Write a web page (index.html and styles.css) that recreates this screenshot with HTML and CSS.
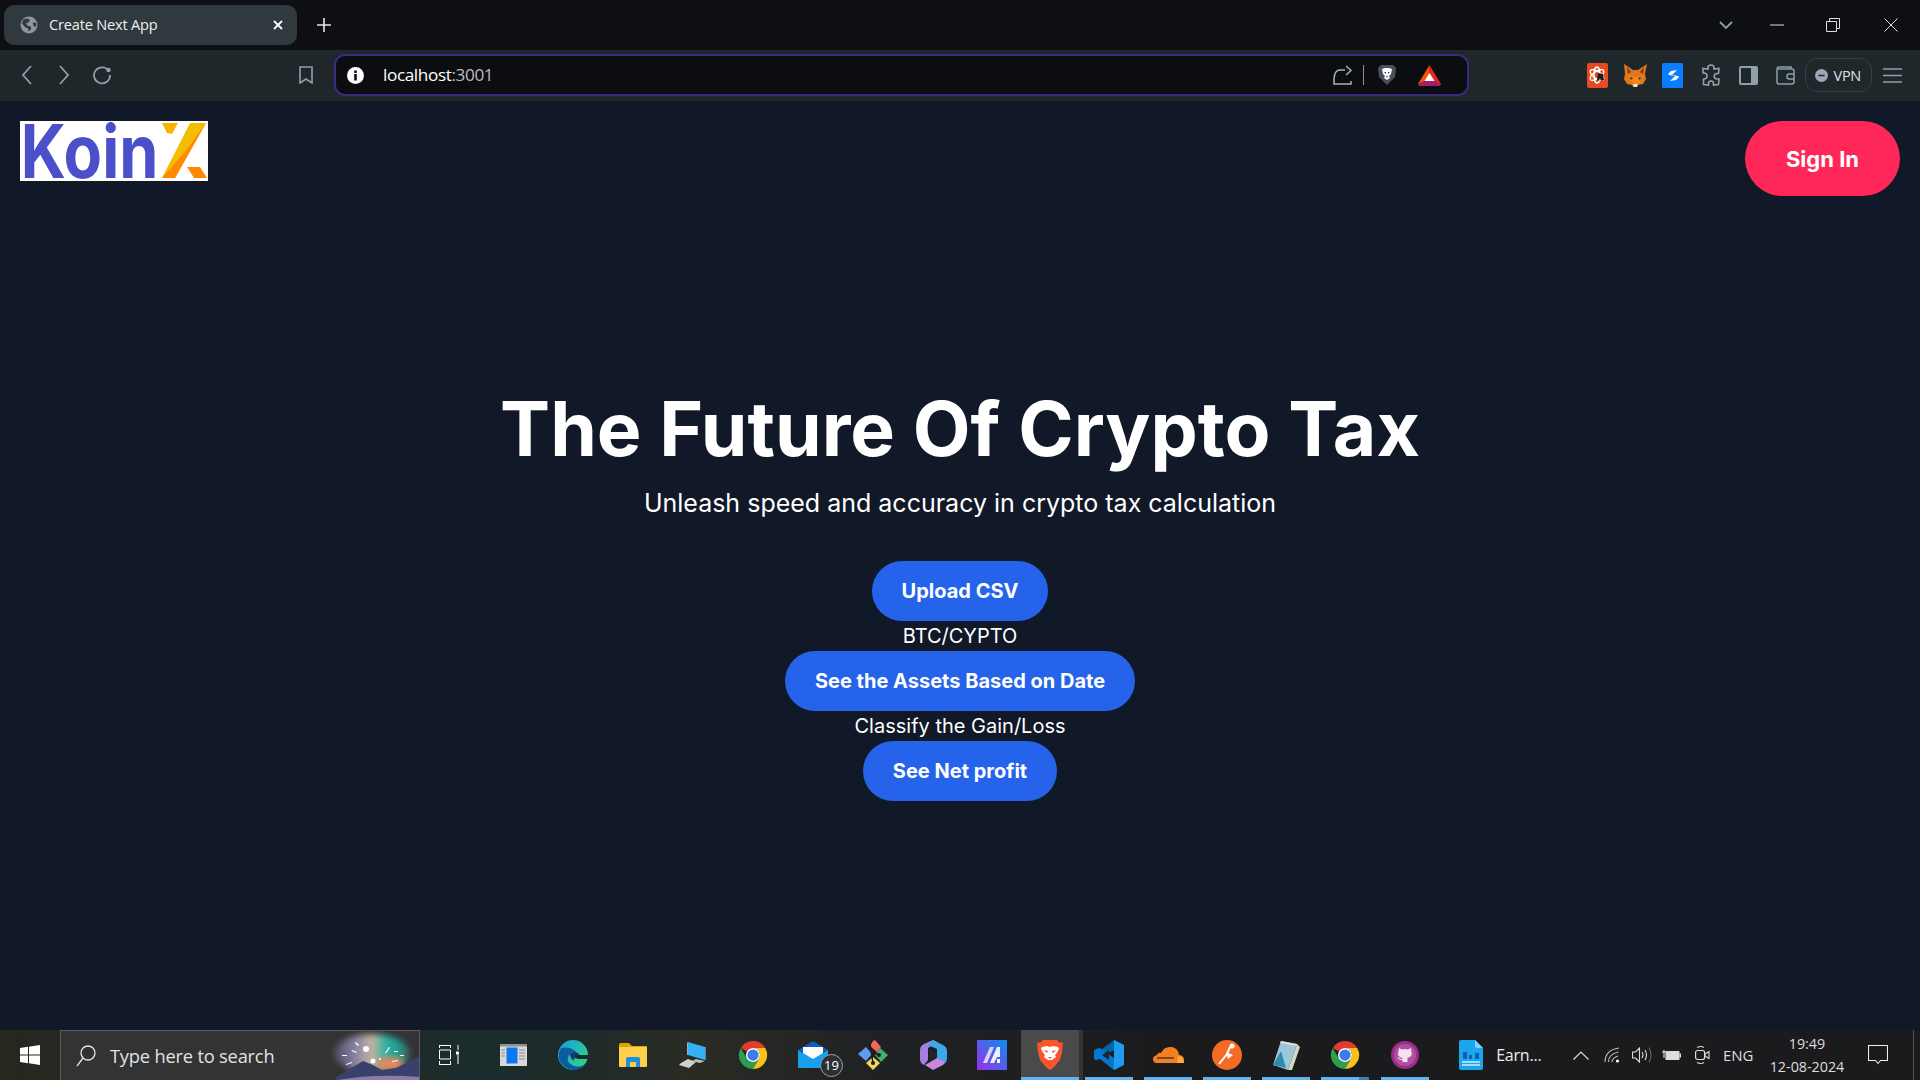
FILE: index.html
```html
<!DOCTYPE html>
<html lang="en">

<head>
    <meta charset="UTF-8">
    <meta name="viewport" content="width=device-width, initial-scale=1.0">
    <title>Create Next App</title>
    <link rel="stylesheet" href="styles.css">
</head>

<body>
    <svg class="defs" width="0" height="0">
        <symbol id="chrome" viewBox="0 0 32 32">
            <path fill="#e33b2e" d="M3 8.5A15 15 0 0 1 29 8.5H16A7.5 7.5 0 0 0 9.5 12.25Z" />
            <path fill="#2f9e4f" d="M3 8.5L9.5 19.75A7.5 7.5 0 0 0 22.5 19.75L16 31A15 15 0 0 1 3 8.5Z" />
            <path fill="#fbc116" d="M29 8.5H16A7.5 7.5 0 0 1 22.5 19.75L16 31A15 15 0 0 0 29 8.5Z" />
            <circle cx="16" cy="16" r="7.5" fill="#fff" />
            <circle cx="16" cy="16" r="6" fill="#3b7de8" />
        </symbol>
    </svg>

    <!-- browser tabs -->
    <div class="tabstrip">
        <div class="tab">
            <svg class="tab-globe" width="18" height="18" viewBox="0 0 18 18">
                <circle cx="9" cy="9" r="8.5" fill="#8d979c" />
                <path fill="#30393e" d="M6 2.5l4 1-1 2.5-3 1.5 2 2.5 3 .5v2.5l-2 2.5-1-3-3-1.5-3-3.5 1-3.5zM12.5 7l3.5-.5.5 3-2 1.5z" />
            </svg>
            <span class="tab-title">Create Next App</span>
            <svg width="12" height="12" viewBox="0 0 12 12">
                <path d="M2 2l8 8M10 2l-8 8" stroke="#fff" stroke-width="1.8" />
            </svg>
        </div>
        <svg class="newtab" width="16" height="16" viewBox="0 0 16 16">
            <path d="M8 1v14M1 8h14" stroke="#e8e8e8" stroke-width="1.6" />
        </svg>
        <div class="winbtns">
            <svg width="14" height="10" viewBox="0 0 14 10">
                <path d="M1 2l6 6 6-6" fill="none" stroke="#8fa0a8" stroke-width="1.8" />
            </svg>
            <svg class="win-min" width="14" height="2" viewBox="0 0 14 2">
                <path d="M0 1h14" stroke="#ddd" stroke-width="1" />
            </svg>
            <svg class="win-restore" width="14" height="14" viewBox="0 0 14 14">
                <path d="M.5 3.5h10v10H.5zM3.5 3.5V.5h10v10h-3" fill="none" stroke="#ddd" />
            </svg>
            <svg class="win-close" width="14" height="14" viewBox="0 0 14 14">
                <path d="M.5.5l13 13M13.5.5l-13 13" stroke="#ddd" />
            </svg>
        </div>
    </div>

    <!-- address bar and extensions -->
    <div class="toolbar">
        <div class="navbtns">
            <svg width="12" height="20" viewBox="0 0 12 20">
                <path d="M10 1L2 10l8 9" fill="none" stroke="#8fa0a8" stroke-width="1.8" />
            </svg>
            <svg width="12" height="20" viewBox="0 0 12 20">
                <path d="M2 1l8 9-8 9" fill="none" stroke="#8fa0a8" stroke-width="1.8" />
            </svg>
            <svg class="reload" width="20" height="20" viewBox="0 0 20 20">
                <path d="M17 6.5A8 8 0 1 0 18 10" fill="none" stroke="#8fa0a8" stroke-width="1.8" />
                <circle cx="16.5" cy="5" r="2.2" fill="#8fa0a8" />
            </svg>
        </div>
        <svg class="bookmark" width="14" height="18" viewBox="0 0 14 18">
            <path d="M1 1h12v16l-6-4-6 4z" fill="none" stroke="#8fa0a8" stroke-width="1.6" />
        </svg>
        <div class="addressbar">
            <svg width="17" height="17" viewBox="0 0 17 17">
                <circle cx="8.5" cy="8.5" r="8.5" fill="#fff" />
                <path d="M7.2 3.5h2.6v2.4H7.2zM7.2 7h2.6v6.5H7.2z" fill="#0c0d11" />
            </svg>
            <span class="url">localhost<span class="url-port">:3001</span></span>
            <svg class="share" width="20" height="20" viewBox="0 0 20 20">
                <path d="M12 5H7Q1.5 5 1 14M13 1l5 4.5-5 4.5M1 14v5h17v-3" fill="none" stroke="#a9b1b5" stroke-width="1.5" />
            </svg>
            <span class="addr-sep"></span>
            <svg class="lion" width="20" height="22" viewBox="0 0 20 22">
                <path fill="#4b4f5c" d="M4 1h12l3 3-1 9-8 8-8-8-1-9z" />
                <path fill="#fff" d="M5 5l3-1h4l3 1-1 5-2 2 1 2-3 2-3-2 1-2-2-2z" />
                <path fill="#4b4f5c" d="M7 8h2v2zM13 8h-2v2zM9 12h2l-1 2z" />
            </svg>
            <svg class="bat" width="23" height="21" viewBox="0 0 23 21">
                <path fill="#ff5000" d="M11.5 0L0 19h6l5.5-9z" />
                <path fill="#e8261c" d="M11.5 0L23 19h-6l-5.5-9z" />
                <path fill="#9e1f63" d="M0 19l6-3h11l6 3-1 2H1z" />
                <path fill="#fff" d="M11.5 8l5 8h-10z" />
            </svg>
        </div>
        <div class="extensions">
            <div class="ext">
                <svg width="21" height="25" viewBox="0 0 21 25">
                    <rect width="21" height="25" rx="2" fill="#e84a1f" />
                    <g fill="none" stroke="#fff" stroke-width="1.4">
                        <ellipse cx="10" cy="12" rx="8" ry="3.5" transform="rotate(35 10 12)" />
                        <ellipse cx="10" cy="12" rx="8" ry="3.5" transform="rotate(-35 10 12)" />
                        <ellipse cx="10" cy="12" rx="3" ry="8" />
                    </g>
                    <path d="M11 10l5 1 1 6-3 1-1-3-1 3-2-1z" fill="#1b1b1b" />
                </svg>
            </div>
            <div class="ext">
                <svg width="23" height="23" viewBox="0 0 23 23">
                    <path fill="#e2761b" d="M0 0l9 6h5l9-6-2 10 1 5-3 5-5 1-1 2H9l-1-2-5-1-3-5 1-5z" />
                    <path fill="#f6851b" d="M4 11l7 2 1 0 7-2-3 8-4 1-4-1z" />
                    <path fill="#763d16" d="M3 3l4 5-3 2zM20 3l-4 5 3 2z" />
                    <path fill="#e4ebf0" d="M9 20h5l-1 3h-3z" />
                    <path fill="#233447" d="M6 13l3 1-2 2zM17 13l-3 1 2 2z" />
                </svg>
            </div>
            <div class="ext">
                <svg width="21" height="25" viewBox="0 0 21 25">
                    <rect width="21" height="25" rx="1.5" fill="#0a7cff" />
                    <path d="M15 7l-6 1-3 3 1 1 6 1-5 5 6-1 3-3-1-1-6-1z" fill="#fff" />
                </svg>
            </div>
            <div class="ext">
                <svg width="20" height="22" viewBox="0 0 20 22">
                    <path d="M7 3.5a3 2.5 0 0 1 6 0V5l5-.5-.5 5H16a2.5 2.5 0 0 0 0 5.5h2l-.5 5.5-5 .5v-1.500a2.5 2.5 0 0 0-5 0V21l-5-.5V15H3a3 3 0 0 0 0-6H2V4.5L7 5z" fill="none" stroke="#8fa0a8" stroke-width="1.6" />
                </svg>
            </div>
            <div class="ext">
                <svg width="19" height="19" viewBox="0 0 19 19">
                    <rect x="1" y="1" width="17" height="17" rx="1" fill="none" stroke="#8fa0a8" stroke-width="2" />
                    <rect x="12" y="1" width="6" height="17" fill="#8fa0a8" />
                </svg>
            </div>
            <div class="ext">
                <svg width="19" height="19" viewBox="0 0 19 19">
                    <path d="M15 3V1H3Q1 1 1 3v13q0 2 2 2h13q2 0 2-2V5q0-2-2-2H2M18 8h-5q-2 0-2 2.5t2 2.5h5" fill="none" stroke="#8fa0a8" stroke-width="1.5" />
                </svg>
            </div>
            <div class="vpn">
                <svg width="13" height="13" viewBox="0 0 13 13">
                    <circle cx="6.5" cy="6.5" r="6.5" fill="#9ea3b8" />
                    <path d="M3.5 6.5h6" stroke="#1f272a" stroke-width="1.5" />
                </svg>
                <span>VPN</span>
            </div>
            <svg class="burger" width="19" height="15" viewBox="0 0 19 15">
                <path d="M0 1h19M0 7.5h19M0 14h19" stroke="#8fa0a8" stroke-width="1.5" />
            </svg>
        </div>
    </div>

    <!-- the app itself -->
    <div class="page">
        <header class="top">
            <div class="logo">
                <span class="logo-text">Koin</span>
                <svg class="logo-x" width="48" height="60" viewBox="0 0 48 60">
                    <path fill="#f4b400" d="M2 2h16l-6 11-5-1z" />
                    <path fill="#f5bd00" d="M30 2h16L15 57H2z" />
                    <path fill="#ff8a00" d="M46 2L15 57H2l26-30z" />
                    <path fill="#ff8a00" d="M27 46h13l7 11H34z" />
                </svg>
            </div>
            <button class="signin">Sign In</button>
        </header>
        <main class="hero">
            <h1>The Future Of Crypto Tax</h1>
            <p class="sub">Unleash speed and accuracy in crypto tax calculation</p>
            <button class="action">Upload CSV</button>
            <div class="step">BTC/CYPTO</div>
            <button class="action">See the Assets Based on Date</button>
            <div class="step">Classify the Gain/Loss</div>
            <button class="action">See Net profit</button>
        </main>
    </div>

    <!-- windows taskbar -->
    <div class="taskbar">
        <div class="start">
            <svg width="20" height="20" viewBox="0 0 20 20">
                <path fill="#fff" d="M0 3l8-1.2v7.7H0zM9 1.7L20 0v9.5H9zM0 10.5h8v7.7L0 17zM9 10.5h11V20L9 18.3z" />
            </svg>
        </div>
        <div class="search">
            <svg width="20" height="24" viewBox="0 0 20 24">
                <circle cx="12" cy="9" r="7" fill="none" stroke="#e6e6e6" stroke-width="1.3" />
                <path d="M7 14l-6 8" stroke="#e6e6e6" stroke-width="1.3" />
            </svg>
            <span class="search-text">Type here to search</span>
            <svg class="search-art" width="92" height="50" viewBox="0 0 92 50">
                <defs>
                    <linearGradient id="glow" x1="0" y1="0" x2="1" y2="0">
                        <stop offset="0" stop-color="#4c4a62" />
                        <stop offset="0.3" stop-color="#8f86a8" />
                        <stop offset="0.5" stop-color="#c6b4a0" />
                        <stop offset="0.65" stop-color="#35b5a5" />
                        <stop offset="0.85" stop-color="#1f9a8c" />
                        <stop offset="1" stop-color="#4a5a5a" />
                    </linearGradient>
                    <filter id="soft" x="-20%" y="-20%" width="140%" height="140%">
                        <feGaussianBlur stdDeviation="3" />
                    </filter>
                </defs>
                <ellipse cx="44" cy="22" rx="38" ry="19" fill="url(#glow)" filter="url(#soft)" />
                <ellipse cx="62" cy="33" rx="14" ry="7" fill="#e8875a" filter="url(#soft)" />
                <path fill="#39406e" d="M8 46l27-16 10 4 9 5 14-2 24-12v25H8z" />
                <path fill="#8a7ba8" d="M4 50q40-8 88-4v4z" />
                <g fill="#fff">
                    <path d="M14 24h5v1h-5zM24 19l5 2-.5 1-5-2zM28 11l3 3-1 1-3-3zM18 33l6-2v1l-6 2zM57 22l4-6 1 .6-4 6zM66 20h4v1h-4zM72 24h4v1h-4zM64 30l6-1v1l-6 1z" />
                    <circle cx="38" cy="18" r="3" />
                    <circle cx="45" cy="30" r="2.5" />
                    <circle cx="52" cy="28" r="1" />
                </g>
            </svg>
        </div>

        <div class="taskview">
            <svg width="20" height="20" viewBox="0 0 20 20">
                <path d="M0 .5h12M0 19.5h12M.5 0v3M11.5 0v3M.5 16v3M11.5 16v3M.5 5h11v9H.5zM19 0v5M19 10v9" fill="none" stroke="#fff" stroke-width="1" />
                <rect x="17" y="6.5" width="3" height="3" fill="#fff" />
            </svg>
        </div>

        <div class="app">
            <svg width="27" height="22" viewBox="0 0 27 22">
                <rect width="27" height="22" fill="#d9d9d9" />
                <rect y="0" width="27" height="2.5" fill="#8e8e8e" />
                <rect x="6.5" y="3.5" width="11" height="16" fill="#0a78f0" />
                <path d="M1.5 6h3.5M1.5 9h3.5M1.5 12h3.5M19 6h6M19 9h6M19 12h6M19 15h6" stroke="#888" stroke-width="1" />
            </svg>
        </div>
        <div class="app">
            <svg width="30" height="30" viewBox="0 0 30 30">
                <defs>
                    <linearGradient id="edge" x1="0" y1="0" x2="1" y2="1">
                        <stop offset="0" stop-color="#1a9ee0" />
                        <stop offset="1" stop-color="#2fdc7a" />
                    </linearGradient>
                </defs>
                <circle cx="15" cy="15" r="15" fill="url(#edge)" />
                <path fill="#0c59a4" d="M3 8Q0 14 1 19q3 9 14 11 7 0 11-5-7 3-12 0-7-4-3-10 3-3 8-2-6-7-16-5-3 0 0 0z" />
                <path fill="#1a3a6a" d="M12 14q4-3 8-1l3 4-5 1q-3 0-2 3-4-3-4-7z" />
                <path fill="#1f2a2e" d="M17 15h13v4H20q-3-1-3-4z" />
            </svg>
        </div>
        <div class="app">
            <svg width="28" height="24" viewBox="0 0 28 24">
                <path fill="#e0a106" d="M0 2q0-2 2-2h8l3 3h15v6H0z" />
                <rect y="4" width="28" height="20" rx="1" fill="#fcd04c" />
                <path fill="#1f8fd8" d="M7 24v-8q0-2 2-2h10q2 0 2 2v8h-4v-5h-6v5z" />
            </svg>
        </div>
        <div class="app">
            <svg width="28" height="26" viewBox="0 0 28 26">
                <path fill="#32b1f5" d="M9 0l17 5v13L9 13z" />
                <path fill="#8db3c8" d="M9 0l-1 1v12l1 0z" />
                <path fill="#5f7f90" d="M26 5l1 0v13h-1z" />
                <path fill="#d0d0d0" d="M9 17l8 3-7 6-10-3 2-2z" />
                <path fill="#bbb" d="M17 17l9 2-5 2-8-2z" />
            </svg>
        </div>
        <div class="app">
            <svg width="30" height="30"><use href="#chrome" /></svg>
        </div>
        <div class="app">
            <svg width="30" height="28" viewBox="0 0 30 28">
                <path fill="#0a5eb8" d="M0 9L15 0l15 9-15 8z" />
                <path fill="#fff" d="M5 6h20v8l-10 5-10-5z" />
                <path fill="#17a0f0" d="M0 9l15 9 15-9v17q0 1-1 1H1q-1 0-1-1z" />
            </svg>
            <span class="mail-badge">19</span>
        </div>
        <div class="app">
            <svg width="30" height="30" viewBox="0 0 30 30">
                <path fill="#f0695a" d="M15 0l2-1 6 7-4 5-7-6z" transform="translate(0 1)" />
                <path fill="#5f9cf0" d="M8 7l6 7-6 7-8-7z" />
                <path fill="#45b06a" d="M22 8l8 7-7 7-6-7z" />
                <path fill="#f4d65c" d="M15 17l7 6-7 7-7-7z" />
                <path d="M12 4l3 19M15 13l7 2" stroke="#1a1a1a" stroke-width="1.5" fill="none" />
                <circle cx="15" cy="23" r="2" fill="#1a1a1a" />
                <circle cx="21" cy="15" r="2" fill="#1a1a1a" />
            </svg>
        </div>
        <div class="app">
            <svg width="27" height="30" viewBox="0 0 27 30">
                <path fill="#a67ee0" d="M13 0l4 2-9 6v12l-4 5q-4-2-4-6V10q0-4 4-6z" />
                <path fill="#3aa8e8" d="M13 0l10 5q4 2 4 6v8q0 3-3 5l-7-4V9L8 5z" />
                <path fill="#c58ae0" d="M5 25l12-7 8 4-2 3-10 5z" />
                <path fill="#22252a" d="M9 9l6 3q3 2 2 5t-5 2l-3-1z" />
            </svg>
        </div>
        <div class="app app-narrow">
            <svg width="30" height="30" viewBox="0 0 30 30">
                <defs>
                    <linearGradient id="ml" x1="0" y1="1" x2="1" y2="0">
                        <stop offset="0" stop-color="#9a2fe8" />
                        <stop offset="1" stop-color="#0a8ff0" />
                    </linearGradient>
                </defs>
                <rect width="30" height="30" fill="url(#ml)" />
                <path fill="#fff" opacity=".75" d="M6 23l7-16h4l-7 16z" />
                <path fill="#fff" opacity=".9" d="M13 23l7-16h3v10h-3l-3 6z" />
                <path fill="#fff" d="M20 19h3v4h-3z" />
            </svg>
        </div>
        <div class="app app-narrow app-active">
            <svg width="26" height="30" viewBox="0 0 26 30">
                <path fill="#fb542b" d="M6 0h14l3 3 3-1-1 10-2 8-7 8-3 2-3-2-7-8-2-8L0 2l3 1z" />
                <path fill="#fff" d="M5 7l5-1 3 1 3-1 5 1 1 2-3 5-1 1 1 2-4 3h-4l-4-3 1-2-1-1-3-5z" />
                <path fill="#fb542b" d="M7 10l4 1-1 2zM19 10l-4 1 1 2zM11 17h4l-2 2z" />
            </svg>
        </div>
        <div class="app app-open">
            <svg width="30" height="30" viewBox="0 0 30 30">
                <path fill="#0065a9" d="M0 11l2-1 4 .5L20 0l4 2v7L8 15l-6 5-2-1z" />
                <path fill="#007acc" d="M2 9l4-1 18 13v7l-4 2L6 19l-4 1-2-1v-8z" />
                <path fill="#1f9cf0" d="M20 0l10 5v20l-10 5z" />
                <path fill="#22252a" d="M8 15l7-5 0 10z" />
            </svg>
        </div>
        <div class="app app-open">
            <svg width="32" height="18" viewBox="0 0 32 18">
                <path fill="#f38020" d="M4 17q-3-1-3-4t4-4q1-3 4-2 3-7 11-6 6 1 7 8 4 0 5 4t-1 4z" />
                <path fill="#fbad41" d="M26 10q5 0 6 7h-7z" />
                <path d="M5 12h17" stroke="#22252a" stroke-width="1.2" />
            </svg>
        </div>
        <div class="app app-open">
            <svg width="30" height="30" viewBox="0 0 30 30">
                <circle cx="15" cy="15" r="15" fill="#f56b25" />
                <path d="M7 24l8-10 3-7" fill="none" stroke="#fff" stroke-width="2" />
                <circle cx="20" cy="6" r="2.5" fill="#fff" />
                <path d="M14 12l7 3-5 4z" fill="#fff" />
            </svg>
        </div>
        <div class="app app-open">
            <svg width="28" height="30" viewBox="0 0 28 30">
                <path fill="#9cc7da" d="M9 1l16 3-9 26L1 25z" />
                <path fill="#2d8cae" d="M1 25l8-14 5 17z" />
                <path fill="#d5d8c0" d="M25 4l3 3-8 23-4 0z" />
                <path fill="#dcdcdc" d="M9 1l16 3-.5 2L8 3z" />
            </svg>
        </div>
        <div class="app app-open app-stacked">
            <svg width="30" height="30"><use href="#chrome" /></svg>
        </div>
        <div class="app app-open">
            <svg width="28" height="28" viewBox="0 0 28 28">
                <circle cx="14" cy="14" r="14" fill="#9c2c88" />
                <circle cx="14" cy="14" r="11" fill="#b04ea0" />
                <path fill="#f4e2f0" d="M8 7l3 1.5q3-.8 6 0L20 7l.4 3.5q1.200 4-1.600 5.500-1 .6-2.300.8v4.200h-5v-2q-2.600.5-4-1.600l-2-1 2.600.3 1.600 1.300h1.800v-1q-1.500-.2-2.500-.8-2.800-1.500-1.600-5.500z" />
            </svg>
        </div>
        <div class="docapp">
            <svg width="24" height="30" viewBox="0 0 24 30">
                <path fill="#1ca7ec" d="M2 0h14l8 8v20q0 2-2 2H2q-2 0-2-2V2q0-2 2-2z" />
                <path fill="#7fd3f8" d="M16 0l8 8h-6q-2 0-2-2z" />
                <path fill="#0a5eb8" d="M4 12h4v7H4zM10 15h3v4h-3zM16 13h4v6h-4z" />
                <path d="M3 22h18M3 25h18" stroke="#cfeefc" stroke-width="1.5" />
            </svg>
            <span>Earn...</span>
        </div>

        <div class="tray">
            <svg class="tray-chevron" width="16" height="9" viewBox="0 0 16 9">
                <path d="M.5 8.5L8 1l7.5 7.5" fill="none" stroke="#ddd" stroke-width="1.2" />
            </svg>
            <svg class="tray-wifi" width="16" height="16" viewBox="0 0 16 16">
                <path d="M1 15Q1 3 15 1M4.5 15q0-8 10-10M8 15q0-4 6-6" fill="none" stroke="#bbb" stroke-width="1.2" />
                <circle cx="13.5" cy="14" r="1.6" fill="#fff" />
            </svg>
            <svg class="tray-sound" width="20" height="16" viewBox="0 0 20 16">
                <path d="M.5 5h3l4-4v14l-4-4h-3zM10 5q2 3 0 6M13 3q3 5 0 10" fill="none" stroke="#ddd" stroke-width="1.1" />
                <path d="M17 .5q4 7.5 0 15" fill="none" stroke="#666" stroke-width="1.1" />
            </svg>
            <svg class="tray-batt" width="20" height="12" viewBox="0 0 20 12">
                <path d="M3 1v4M3 5v4M1 3h4" stroke="#ddd" stroke-width="1.2" fill="none" />
                <rect x="4.5" y="2" width="14" height="9" fill="#ddd" />
                <rect x="18.5" y="4.5" width="1.5" height="4" fill="#ddd" />
            </svg>
            <svg class="tray-meet" width="15" height="20" viewBox="0 0 15 20">
                <rect x=".6" y="5.5" width="9" height="9" rx="2" fill="none" stroke="#ddd" stroke-width="1.2" />
                <path d="M10 9l4-2.5v7L10 11zM2 2.5q4-2 7 0M2 17.5q4 2 7 0" fill="none" stroke="#ddd" stroke-width="1.1" />
            </svg>
            <span class="tray-lang">ENG</span>
            <div class="clock">
                <div>19:49</div>
                <div>12-08-2024</div>
            </div>
            <svg class="tray-note" width="20" height="20" viewBox="0 0 20 20">
                <path d="M.5.5h19v15h-7l-2.5 3-2.5-3h-7z" fill="none" stroke="#eee" stroke-width="1.1" />
            </svg>
            <span class="tray-end"></span>
        </div>
    </div>
</body>

</html>
```

FILE: styles.css
```css
* {
    margin: 0;
    padding: 0;
    box-sizing: border-box;
}

html,
body {
    height: 100%;
    overflow: hidden;
}

body {
    display: flex;
    flex-direction: column;
    background-color: #111827;
    font-family: "Open Sans", "Noto Sans", sans-serif;
    color: #fff;
}

svg {
    display: block;
    flex-shrink: 0;
}

.defs {
    position: absolute;
}

/* tab strip */
.tabstrip {
    display: flex;
    align-items: center;
    height: 50px;
    padding-left: 4px;
    background-color: #0e0f13;
}

.tab {
    display: flex;
    align-items: center;
    width: 293px;
    height: 40px;
    padding: 0 13px 0 16px;
    border-radius: 10px;
    background-color: #30393e;
}

.tab-title {
    flex: 1;
    margin: 0 0 2px 11px;
    font-size: 14.6px;
    letter-spacing: -0.2px;
    color: #eef0f1;
}

.newtab {
    margin-left: 19px;
}

.winbtns {
    display: flex;
    align-items: center;
    margin-left: auto;
    padding-right: 22px;
}

.win-min {
    margin-left: 37px;
}

.win-restore {
    margin-left: 42px;
}

.win-close {
    margin-left: 44px;
}

/* toolbar */
.toolbar {
    display: flex;
    align-items: center;
    height: 51px;
    padding: 0 0 1px 21px;
    background-color: #1f272a;
}

.navbtns {
    display: flex;
    align-items: center;
    gap: 25px;
}

.reload {
    margin-left: -3px;
}

.bookmark {
    margin: 0 -1px 0 187px;
}

.addressbar {
    display: flex;
    align-items: center;
    width: 1135px;
    height: 42px;
    margin-left: 22px;
    padding: 0 26px 0 11px;
    border: 2px solid #3b2a80;
    border-radius: 11px;
    background-color: #0c0d11;
}

.url {
    flex: 1;
    margin: 0 0 2px 19px;
    font-size: 17.2px;
    letter-spacing: -0.4px;
}

.url-port {
    color: #b8bcc4;
}

.addr-sep {
    width: 1px;
    height: 20px;
    margin: 0 13.5px 0 10px;
    background-color: #8a8f94;
}

.bat {
    margin-left: 21px;
}

.extensions {
    display: flex;
    align-items: center;
    margin-left: 110px;
}

.ext {
    display: flex;
    justify-content: center;
    width: 37.6px;
}

.vpn {
    display: flex;
    align-items: center;
    gap: 6px;
    width: 67px;
    height: 34px;
    padding-left: 9px;
    border: 1px solid #33424a;
    border-radius: 12px;
    font-size: 14.5px;
    letter-spacing: -0.3px;
    color: #dde2e5;
}

.burger {
    margin-left: 11.5px;
}

/* page */
.page {
    flex: 1;
    display: flex;
    flex-direction: column;
    padding: 20px;
    font-family: Inter, sans-serif;
    background-color: #111827;
}

.top {
    display: flex;
    justify-content: space-between;
    align-items: flex-start;
}

.logo {
    display: flex;
    width: 188px;
    height: 60px;
    background-color: #fff;
}

.logo-text {
    width: 140px;
    padding-left: 1px;
    font-size: 74px;
    font-weight: 700;
    line-height: 60px;
    white-space: nowrap;
    color: #4b4fc9;
    transform: scaleX(.85);
    transform-origin: left center;
}

.signin {
    width: 155px;
    height: 75px;
    border: none;
    border-radius: 38px;
    background-color: #ff2757;
    font-family: Inter, sans-serif;
    font-size: 22px;
    font-weight: 700;
    color: #fff;
}

.hero {
    display: flex;
    flex-direction: column;
    align-items: center;
    margin-top: 193px;
}

.hero h1 {
    font-size: 75px;
    font-weight: 700;
    line-height: 80px;
}

.sub {
    margin: 18px 0 42px;
    font-size: 25px;
    line-height: 32px;
}

.action {
    height: 60px;
    padding: 0 30px;
    border: none;
    border-radius: 30px;
    background-color: #2563eb;
    font-family: Inter, sans-serif;
    font-size: 20px;
    font-weight: 700;
    color: #fff;
}

.step {
    font-size: 20px;
    line-height: 30px;
}

/* taskbar */
.taskbar {
    display: flex;
    align-items: stretch;
    height: 50px;
    background: linear-gradient(90deg, #26271f 0, #1c2c2c 25%, #1d2b2a 30%, #2b2b24 36%, #1f2224 46%, #1b1b1d 60%, #1b1b1d 100%);
}

.start {
    display: flex;
    align-items: center;
    justify-content: center;
    width: 60px;
}

.search {
    display: flex;
    align-items: center;
    width: 360px;
    padding-left: 15px;
    border: 1px solid #5a5a5a;
    border-bottom: none;
    background-color: #333;
    overflow: hidden;
}

.search-text {
    margin-left: 14px;
    font-size: 18.3px;
    letter-spacing: -0.2px;
    color: #dfe3e8;
}

.search-art {
    margin-left: auto;
    margin-right: -1px;
}

.taskview {
    display: flex;
    align-items: center;
    justify-content: center;
    width: 58px;
    margin-right: 5px;
}

.app {
    position: relative;
    display: flex;
    flex: none;
    align-items: center;
    justify-content: center;
    width: 60px;
}

.app-narrow {
    width: 58px;
}

.app-open {
    width: 59.2px;
    background: linear-gradient(#60b4f0, #60b4f0) center bottom / 48px 3px no-repeat;
}

.app-active {
    background: linear-gradient(#60b4f0, #60b4f0) center bottom / 100% 3px no-repeat, #4a4a4a;
    box-shadow: 4px 0 0 #333;
}

.app-stacked {
    background: linear-gradient(90deg, #60b4f0 0, #60b4f0 80%, #3f7fb0 80%) center bottom / 48px 3px no-repeat;
}

.mail-badge {
    position: absolute;
    left: 37px;
    top: 24px;
    width: 23px;
    height: 23px;
    border: 1px solid #9aa0a5;
    border-radius: 50%;
    background-color: #2b3034;
    font-size: 13px;
    line-height: 21px;
    text-align: center;
}

.docapp {
    display: flex;
    align-items: center;
    gap: 13px;
    margin-left: 25px;
    font-size: 16px;
    letter-spacing: -0.2px;
    color: #eee;
}

.tray {
    display: flex;
    align-items: center;
    margin-left: auto;
}

.tray-wifi {
    margin-left: 15px;
}

.tray-sound {
    margin-left: 12px;
}

.tray-batt {
    margin-left: 9px;
}

.tray-meet {
    margin-left: 13.5px;
}

.tray-lang {
    margin-left: 13px;
    font-size: 15px;
    color: #ddd;
}

.clock {
    width: 90px;
    margin-left: 8.5px;
    font-size: 14.3px;
    line-height: 23px;
    text-align: center;
    color: #ddd;
}

.tray-note {
    margin-left: 16px;
}

.tray-end {
    width: 1px;
    height: 100%;
    margin-left: 25px;
    margin-right: 6px;
    background-color: #555;
}
```
